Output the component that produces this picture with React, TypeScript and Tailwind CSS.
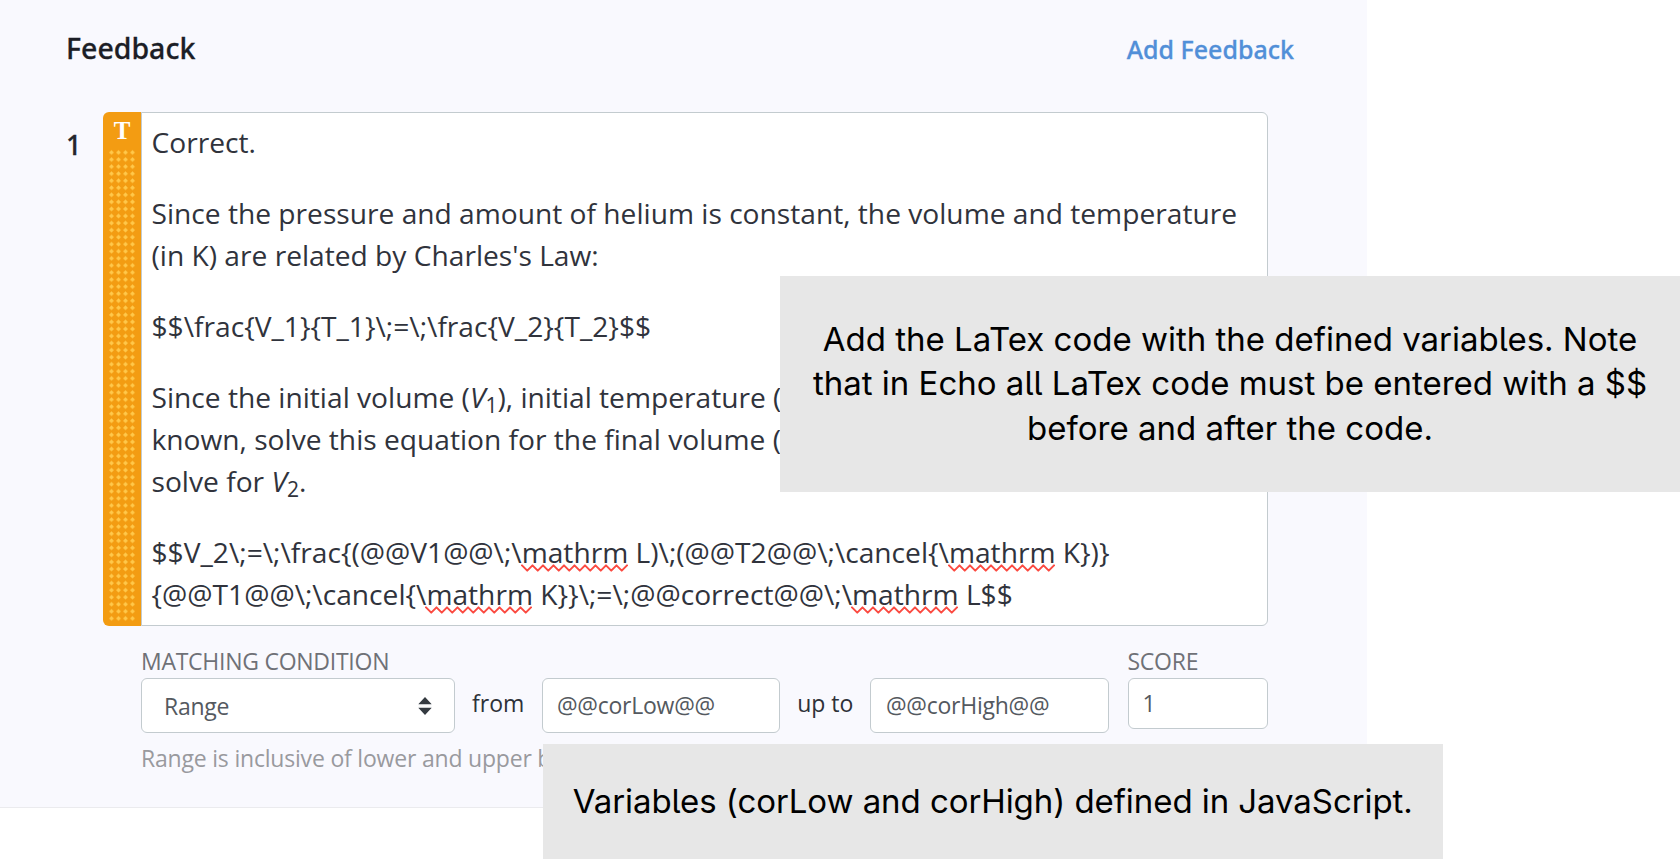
import type { ReactNode } from "react";

function Misspelled({ children }: { children: ReactNode }) {
  const points = Array.from({ length: 21 }, (_, i) => `${(1 + i * 5.25).toFixed(2)},${i % 2 ? 6.6 : 1.4}`).join(" ");
  return (
    <span className="relative inline-block">
      {children}
      <svg className="absolute -left-px top-[33px]" width="107" height="8" viewBox="0 0 107 8" fill="none">
        <polyline points={points} stroke="#fb4a41" strokeWidth="2" strokeLinejoin="round" strokeLinecap="round" />
      </svg>
    </span>
  );
}

function DragHandle() {
  return (
    <div className="flex w-[38px] shrink-0 flex-col items-center rounded-l-[6px] bg-[#f39c12]">
      <div className="h-[37px] pt-[5px] font-['Liberation_Serif',serif] text-[25px] leading-[28px] font-bold text-white">T</div>
      <svg width="28" height="474" viewBox="0 0 28 474">
        <defs>
          <pattern id="grip" width="7" height="7.06" patternUnits="userSpaceOnUse">
            <path d="M3.5 1.4 5.6 3.5 3.5 5.6 1.4 3.5Z" fill="#ffc84a" stroke="#ffc84a" strokeWidth="0.5" />
          </pattern>
        </defs>
        <rect width="28" height="473" fill="url(#grip)" />
      </svg>
    </div>
  );
}

function Field({ children, className }: { children: ReactNode; className: string }) {
  return (
    <div className={`flex items-center rounded-[6px] border border-[#c3cbcf] bg-white tracking-[-0.25px] text-[#545960] ${className}`}>
      {children}
    </div>
  );
}

export default function App() {
  return (
    <div className="relative h-[859px] w-[1680px] overflow-hidden bg-white font-['Open_Sans',sans-serif]">
      <section className="h-[808px] w-[1367px] border-b border-[#ebebee] bg-[#f9f9fe] pt-[27.5px] pl-[66px]">
        <header className="flex h-[40px] w-[1228px] items-baseline justify-between font-['Noto_Sans',sans-serif] leading-[40px] font-medium [-webkit-text-stroke-width:0.3px]">
          <h2 className="text-[28.5px] text-[#1c1e26]">Feedback</h2>
          <a className="text-[25px] text-[#518fd8]">Add Feedback</a>
        </header>

        <div className="mt-[44.7px] flex h-[514px]">
          <div className="w-[37px] shrink-0 pt-[12.5px] font-['Noto_Sans',sans-serif] text-[27px] leading-[40px] font-medium text-[#24262d] [-webkit-text-stroke-width:0.3px]">
            1
          </div>
          <DragHandle />
          <div className="w-[1127px] rounded-r-[6px] border border-[#c3cbcf] bg-white pt-[8.3px] pl-[9.5px] text-[28.17px] leading-[42.3px] whitespace-nowrap text-[#30333c]">
            <p className="mb-[28.3px]">Correct.</p>
            <p className="mb-[28.3px]">
              Since the pressure and amount of helium is constant, the volume and temperature
              <br />
              (in K) are related by Charles's Law:
            </p>
            <p className="mb-[28.3px]">{"$$\\frac{V_1}{T_1}\\;=\\;\\frac{V_2}{T_2}$$"}</p>
            <p className="mb-[28.3px]">
              Since the initial volume (<i>V</i>
              <sub className="text-[75%]">1</sub>), initial temperature (
              <br />
              known, solve this equation for the final volume (
              <br />
              solve for <i>V</i>
              <sub className="text-[75%]">2</sub>.
            </p>
            <p>
              {"$$V_2\\;=\\;\\frac{(@@V1@@\\;\\"}
              <Misspelled>mathrm</Misspelled>
              {" L)\\;(@@T2@@\\;\\cancel{\\"}
              <Misspelled>mathrm</Misspelled>
              {" K})}"}
              <br />
              {"{@@T1@@\\;\\cancel{\\"}
              <Misspelled>mathrm</Misspelled>
              {" K}}\\;=\\;@@correct@@\\;\\"}
              <Misspelled>mathrm</Misspelled>
              {" L$$"}
            </p>
          </div>
        </div>

        <div className="mt-[19.6px] ml-[75px] flex text-[23px] leading-[30px]">
          <div className="w-[986.5px] shrink-0">
            <div className="tracking-[-0.26px] text-[#6f7177]">MATCHING CONDITION</div>
            <div className="mt-[2.5px] flex h-[55px]">
              <Field className="w-[313.5px] justify-between pr-[22px] pl-[22px]">
                Range
                <svg width="14" height="18" viewBox="0 0 14 18">
                  <path d="M7 0 13.5 7H.5ZM7 18 .5 11H13.5Z" fill="#343a40" />
                  <path d="M.5 7.6H13.5M.5 10.4H13.5" stroke="#c3c6c9" strokeWidth="1" />
                </svg>
              </Field>
              <div className="flex w-[87.5px] items-center justify-center pb-[5px] text-[#2e3138]">from</div>
              <Field className="w-[237.5px] pb-[2px] pl-[14px]">@@corLow@@</Field>
              <div className="flex w-[90.5px] items-center justify-center pb-[5px] pl-[1px] text-[#2e3138]">up to</div>
              <Field className="w-[238.5px] pb-[2px] pl-[15px]">@@corHigh@@</Field>
            </div>
            <div className="mt-[9.6px] tracking-[-0.2px] text-[#999a9e]">Range is inclusive of lower and upper b</div>
          </div>
          <div className="w-[140.5px]">
            <div className="tracking-[-0.26px] text-[#6f7177]">SCORE</div>
            <Field className="mt-[2.5px] h-[51px] pb-[1px] pl-[14px]">1</Field>
          </div>
        </div>
      </section>

      <aside className="absolute top-[276px] left-[780px] h-[216px] w-[900px] bg-[#e7e7e7] pt-[40.5px] text-center font-['Inter',sans-serif] text-[33px] leading-[44.6px] whitespace-nowrap text-black [font-feature-settings:'cv05']">
        Add the LaTex code with the defined variables. Note
        <br />
        that in Echo all LaTex code must be entered with a $$
        <br />
        before and after the code.
      </aside>
      <aside className="absolute top-[744px] left-[543px] h-[115px] w-[899.5px] bg-[#e7e7e7] pt-[34.5px] text-center font-['Inter',sans-serif] text-[33px] leading-[44.6px] tracking-[-0.07px] whitespace-nowrap text-black [font-feature-settings:'cv05']">
        Variables (corLow and corHigh) defined in JavaScript.
      </aside>
    </div>
  );
}
